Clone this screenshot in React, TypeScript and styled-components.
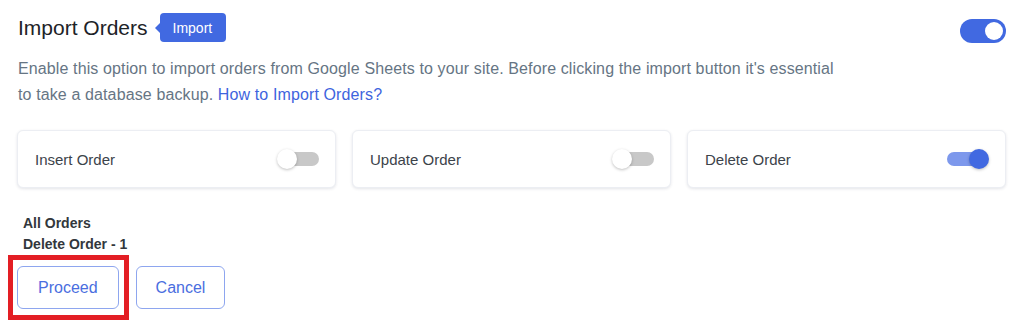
import React, { useState } from "react";
import styled, { createGlobalStyle } from "styled-components";

const GlobalStyle = createGlobalStyle`
  html, body {
    margin: 0;
    padding: 0;
    background: #ffffff;
    font-family: "Liberation Sans", Arial, sans-serif;
  }
  * {
    box-sizing: border-box;
  }
`;

const Page = styled.div`
  padding: 12px 18px 24px 17px;
`;

const Header = styled.div`
  display: flex;
  align-items: center;
  justify-content: space-between;
  height: 31px;
`;

const TitleGroup = styled.div`
  display: flex;
  align-items: center;
  gap: 12px;
`;

const Title = styled.h2`
  margin: 0 0 0 1px;
  font-size: 21px;
  font-weight: 400;
  color: #1d2327;
  line-height: 31px;
`;

const Badge = styled.span`
  position: relative;
  display: inline-flex;
  align-items: center;
  height: 29px;
  padding: 0 14px 0 13px;
  background: #4169e1;
  color: #ffffff;
  font-size: 14px;
  border-radius: 4px;

  &::before {
    content: "";
    position: absolute;
    left: -5px;
    top: 50%;
    transform: translateY(-50%);
    border-top: 6px solid transparent;
    border-bottom: 6px solid transparent;
    border-right: 6px solid #4169e1;
  }
`;

const BigSwitch = styled.button<{ $on: boolean }>`
  position: relative;
  width: 46px;
  height: 24px;
  margin-top: 6px;
  padding: 0;
  border: none;
  border-radius: 12px;
  background: ${(p) => (p.$on ? "#4169e1" : "#c9c9c9")};
  cursor: pointer;

  &::after {
    content: "";
    position: absolute;
    top: 3px;
    left: ${(p) => (p.$on ? "25px" : "3px")};
    width: 18px;
    height: 18px;
    border-radius: 50%;
    background: #ffffff;
  }
`;

const Description = styled.p`
  margin: 13px 0 0 1px;
  max-width: 822px;
  font-size: 16px;
  line-height: 26px;
  letter-spacing: 0.12px;
  color: #667584;
`;

const Link = styled.a`
  color: #3e64de;
  text-decoration: none;
`;

const CardGrid = styled.div`
  display: grid;
  grid-template-columns: repeat(3, 1fr);
  gap: 16px;
  margin-top: 22px;
`;

const Card = styled.div`
  display: flex;
  align-items: center;
  justify-content: space-between;
  height: 58px;
  padding: 0 16px 0 17px;
  background: #ffffff;
  border: 1px solid #eceef3;
  border-radius: 6px;
  box-shadow: 0 1px 3px rgba(30, 40, 70, 0.12);
`;

const CardLabel = styled.span`
  font-size: 15px;
  color: #3c434a;
`;

const SmallSwitch = styled.button<{ $on: boolean }>`
  position: relative;
  width: 42px;
  height: 20px;
  padding: 0;
  border: none;
  background: transparent;
  cursor: pointer;

  &::before {
    content: "";
    position: absolute;
    top: 3px;
    left: ${(p) => (p.$on ? "0" : "4px")};
    right: ${(p) => (p.$on ? "2px" : "0")};
    height: 14px;
    border-radius: 7px;
    background: ${(p) => (p.$on ? "#7d98ec" : "#c8c8c8")};
  }

  &::after {
    content: "";
    position: absolute;
    top: 0;
    left: ${(p) => (p.$on ? "22px" : "0")};
    width: 20px;
    height: 20px;
    border-radius: 50%;
    background: ${(p) => (p.$on ? "#4169e1" : "#ffffff")};
    box-shadow: 0 1px 3px rgba(0, 0, 0, 0.25);
  }
`;

const Summary = styled.div`
  margin: 25px 0 0 6px;
  font-size: 14px;
  font-weight: 700;
  line-height: 21px;
  color: #32373c;
`;

const Actions = styled.div`
  display: flex;
  align-items: flex-start;
  gap: 17px;
  margin-top: 11px;
`;

/* red annotation frame drawn around the Proceed button */
const HighlightFrame = styled.div`
  display: flex;
  margin: -11px -10px -11px -9px;
  padding: 6px 5px 6px 4px;
  border: 5px solid #e31e24;
`;

const ActionButton = styled.button<{ $wide?: boolean }>`
  display: block;
  height: 43px;
  padding: 0 ${(p) => (p.$wide ? "20px" : "19px")};
  background: #ffffff;
  border: 1px solid #8ea6ef;
  border-radius: 6px;
  color: #4a6ee0;
  font-family: "Liberation Sans", Arial, sans-serif;
  font-size: 16px;
  cursor: pointer;
`;

const options = [
  { label: "Insert Order", on: false },
  { label: "Update Order", on: false },
  { label: "Delete Order", on: true },
];

export default function App() {
  const [enabled, setEnabled] = useState(true);
  const [states, setStates] = useState(options.map((o) => o.on));

  return (
    <>
      <GlobalStyle />
      <Page>
        <Header>
          <TitleGroup>
            <Title>Import Orders</Title>
            <Badge>Import</Badge>
          </TitleGroup>
          <BigSwitch $on={enabled} onClick={() => setEnabled(!enabled)} />
        </Header>
        <Description>
          Enable this option to import orders from Google Sheets to your site. Before clicking the
          import button it's essential to take a database backup.{" "}
          <Link href="#">How to Import Orders?</Link>
        </Description>
        <CardGrid>
          {options.map((o, i) => (
            <Card key={o.label}>
              <CardLabel>{o.label}</CardLabel>
              <SmallSwitch
                $on={states[i]}
                onClick={() => setStates(states.map((s, j) => (j === i ? !s : s)))}
              />
            </Card>
          ))}
        </CardGrid>
        <Summary>
          All Orders
          <br />
          Delete Order - 1
        </Summary>
        <Actions>
          <HighlightFrame>
            <ActionButton $wide>Proceed</ActionButton>
          </HighlightFrame>
          <ActionButton>Cancel</ActionButton>
        </Actions>
      </Page>
    </>
  );
}
